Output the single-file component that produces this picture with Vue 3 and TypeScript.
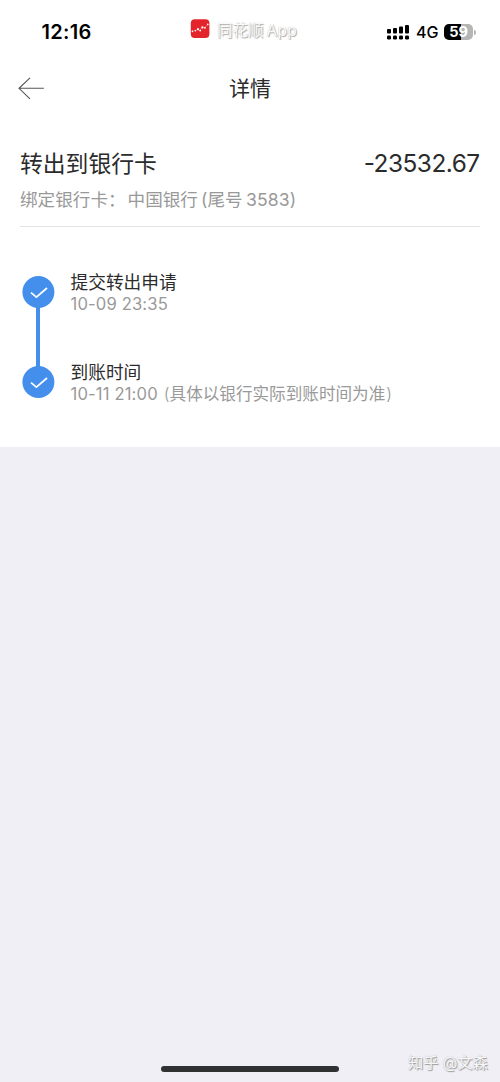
<script setup lang="ts">
interface Step {
  title: string
  time: string
  note: string
}

const steps: Step[] = [
  { title: '提交转出申请', time: '10-09 23:35', note: '' },
  { title: '到账时间', time: '10-11 21:00', note: '具体以银行实际到账时间为准' },
]
const signal: number[] = [4.5, 5.5, 7, 8.5]
</script>

<template>
  <div class="screen">
    <div class="panel">
      <header class="status">
        <span class="clock">12:16</span>
        <div class="source">
          <svg class="logo" width="20" height="20" viewBox="0 0 20 20">
            <rect x="0.8" y="0.3" width="18.6" height="18.6" rx="4" fill="#e3242b" />
            <path d="M2 12.5 5 11.5 8 10.5 10 11.5 12 8.5 14 9 18 5.5" fill="none" stroke="#f08080" stroke-width="0.7" />
            <g fill="#fff">
              <circle cx="2.4" cy="12.4" r="0.8" />
              <circle cx="5.4" cy="11.8" r="0.8" />
              <circle cx="8" cy="10.2" r="1.1" />
              <circle cx="10.2" cy="11.6" r="0.9" />
              <circle cx="12.4" cy="8.4" r="1.1" />
              <circle cx="15" cy="8.8" r="0.9" />
              <circle cx="17.8" cy="5.4" r="0.8" />
            </g>
          </svg>
          <span class="source-name">同花顺<span class="app-word">App</span></span>
        </div>
        <div class="indicators">
          <svg width="24" height="17" viewBox="0 0 24 17">
            <g v-for="(h, i) in signal" :key="i">
              <rect :x="1 + i * 6" :y="9.5 - h" width="4" :height="h" rx="1" />
              <rect :x="1 + i * 6" y="11.6" width="4" height="4" rx="1.4" />
            </g>
          </svg>
          <span class="network">4G</span>
          <div class="battery"><span class="level">59</span></div>
          <span class="battery-tip"></span>
        </div>
      </header>

      <nav class="nav">
        <svg class="back" width="28" height="24" viewBox="0 0 28 24">
          <path d="M13 0.8 2 11.3 13 21.8M2 11.3H26.8" fill="none" stroke="#555" stroke-width="1.1" />
        </svg>
        <h1 class="nav-title">详情</h1>
      </nav>

      <section class="summary">
        <div class="summary-row">
          <span class="kind">转出到银行卡</span>
          <span class="amount">-23532.67</span>
        </div>
        <div class="card-info">
          <span>绑定银行卡：</span><span class="bank">中国银行</span><span class="tail">(尾号</span><span class="digits">3583)</span>
        </div>
      </section>

      <ol class="steps">
        <li v-for="step in steps" :key="step.title" class="step">
          <svg class="check" width="33" height="32" viewBox="0 0 33 32">
            <circle cx="16.4" cy="16" r="16" fill="#448fec" />
            <path d="M9 16.6 14.4 21.2 25 12" fill="none" stroke="#fff" stroke-width="1.7" />
          </svg>
          <div class="step-body">
            <div class="step-title">{{ step.title }}</div>
            <div class="step-detail">
              <span class="time">{{ step.time }}</span>
              <span v-if="step.note" class="note"><span class="paren">(</span>{{ step.note }}<span class="paren close">)</span></span>
            </div>
          </div>
        </li>
      </ol>
    </div>

    <footer class="bottom">
      <span class="home-bar"></span>
      <span class="credit">知乎 @文森</span>
    </footer>
  </div>
</template>

<style>
body {
  background: #efeff5;
}
</style>

<style scoped>
.screen {
  width: 500px;
  height: 1082px;
  display: flex;
  flex-direction: column;
  justify-content: space-between;
  background: #efeff5;
  color: #2b2b2b;
  font-family: Inter, "Noto Sans CJK SC", sans-serif;
  overflow: hidden;
  white-space: nowrap;
}
.panel {
  height: 447px;
  background: #fff;
}
.status {
  height: 64px;
  display: grid;
  grid-template-columns: 190px 1fr 114px;
  align-items: center;
}
.clock {
  padding-left: 41.5px;
  font-size: 20px;
  font-weight: 600;
  letter-spacing: 0.3px;
  color: #000;
}
.source {
  display: flex;
  align-items: center;
  gap: 7px;
  height: 20px;
  margin-top: -6px;
}
.source-name {
  color: #fafafa;
  font-size: 15.5px;
  text-shadow: 1px 1px 1px #aaa, 0 0 1px #bbb;
}
.app-word {
  margin-left: 3px;
  letter-spacing: 0.3px;
}
.indicators {
  display: flex;
  align-items: center;
  color: #000;
}
.network {
  margin-left: 6px;
  font-size: 16px;
  font-weight: 500;
  width: 28px;
}
.battery {
  width: 29px;
  height: 16px;
  border-radius: 5px;
  background: linear-gradient(90deg, #000 59%, #b5b5b5 59%);
  text-align: center;
}
.level {
  display: block;
  color: #fff;
  font-size: 14.5px;
  font-weight: 700;
  line-height: 16px;
}
.battery-tip {
  width: 1.5px;
  height: 5px;
  margin-left: 1px;
  border-radius: 0 2px 2px 0;
  background: #b5b5b5;
}
.nav {
  height: 50px;
  display: grid;
  grid-template-columns: 60px 1fr 60px;
  align-items: center;
}
.back {
  margin-left: 17px;
}
.nav-title {
  margin: 0;
  text-align: center;
  font-size: 21px;
  font-weight: 400;
  line-height: 30px;
}
.summary {
  height: 112px;
  margin: 0 20px;
  border-bottom: 1px solid #e4e4e4;
}
.summary-row {
  padding-top: 31px;
  display: flex;
  justify-content: space-between;
  line-height: 36px;
}
.kind {
  font-size: 22.8px;
  padding-top: 1px;
  margin-bottom: -1px;
}
.amount {
  font-size: 24.4px;
  font-weight: 400;
  letter-spacing: -0.5px;
  margin-right: 0.4px;
}
.card-info {
  display: flex;
  color: #999;
  font-size: 17.6px;
  line-height: 37px;
}
.bank {
  margin-left: 2px;
}
.tail {
  margin-left: 3px;
}
.digits {
  margin-left: 3.5px;
  letter-spacing: 0.1px;
}
.steps {
  list-style: none;
  margin: 0;
  padding: 42.6px 22px 0;
}
.step {
  height: 90px;
  display: flex;
  position: relative;
}
.step:first-child::before {
  content: "";
  position: absolute;
  left: 14.4px;
  top: 22px;
  width: 4px;
  height: 90px;
  background: #448fec;
}
.check {
  position: relative;
  margin-top: 6px;
}
.step-body {
  margin-left: 15.5px;
}
.step-title {
  font-size: 17.7px;
  line-height: 25px;
}
.step-detail {
  display: flex;
  color: #999;
  font-size: 16.6px;
  line-height: 19px;
}
.time {
  letter-spacing: 0.15px;
}
.note {
  margin-left: 6px;
}
.paren {
  font-weight: 300;
}
.close {
  margin-left: 1px;
}
.bottom {
  height: 40px;
  display: grid;
  grid-template-columns: 161px 178px 1fr;
  align-items: center;
}
.home-bar {
  grid-column: 2;
  height: 6px;
  margin-top: 13px;
  border-radius: 3px;
  background: #303133;
}
.credit {
  padding-left: 69px;
  margin-top: -2px;
  font-size: 15.2px;
  color: #f7f7fa;
  text-shadow: 1px 1px 1px #999, 0 0 1px #aaa;
}
</style>
